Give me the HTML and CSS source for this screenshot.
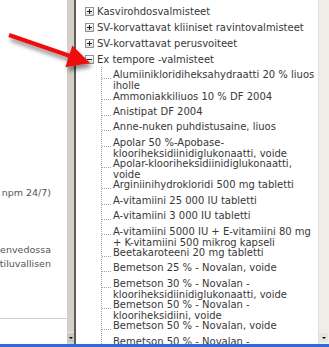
FILE: index.html
```html
<!DOCTYPE html>
<html lang="fi">
<head>
    <meta charset="UTF-8">
    <title>Ex tempore -valmisteet</title>
    <link rel="stylesheet" href="styles.css">
</head>
<body>
    <div class="screen">
        <div class="window">
            <!-- Left pane, mostly scrolled out of view -->
            <div class="left-pane">
                <p class="left-line first"><span>tarvittaessa npm 24/7)</span></p>
                <p class="left-line second"><span>valmisteyhteenvedossa</span></p>
                <p class="left-line"><span>myyntiluvallisen</span></p>
                <div class="left-rule"></div>
            </div>
            <div class="scrollbar dark">
                <div class="track"></div>
                <div class="arrow-btn"></div>
            </div>

            <!-- Product group tree -->
            <div class="tree">
                <ul class="tree-root">
                    <li><div class="node-row"><span class="toggle plus"></span>Luontaistuotteet</div></li>
                    <li><div class="node-row"><span class="toggle plus"></span>Kasvirohdosvalmisteet</div></li>
                    <li><div class="node-row"><span class="toggle plus"></span>SV-korvattavat kliiniset ravintovalmisteet</div></li>
                    <li><div class="node-row"><span class="toggle plus"></span>SV-korvattavat perusvoiteet</div></li>
                    <li>
                        <div class="node-row"><span class="toggle minus"></span>Ex tempore -valmisteet</div>
                        <ul class="children">
                            <li class="wrap">Alumiinikloridiheksahydraatti 20 % liuos iholle</li>
                            <li>Ammoniakkiliuos 10 % DF 2004</li>
                            <li>Anistipat DF 2004</li>
                            <li>Anne-nuken puhdistusaine, liuos</li>
                            <li class="wrap">Apolar 50 %-Apobase-klooriheksidiinidiglukonaatti, voide</li>
                            <li class="wrap">Apolar-klooriheksidiinidiglukonaatti, voide</li>
                            <li>Arginiinihydrokloridi 500 mg tabletti</li>
                            <li>A-vitamiini 25 000 IU tabletti</li>
                            <li>A-vitamiini 3 000 IU tabletti</li>
                            <li class="wrap">A-vitamiini 5000 IU + E-vitamiini 80 mg + K-vitamiini 500 mikrog kapseli</li>
                            <li>Beetakaroteeni 20 mg tabletti</li>
                            <li>Bemetson 25 % - Novalan, voide</li>
                            <li class="wrap">Bemetson 30 % - Novalan - klooriheksidiinidiglukonaatti, voide</li>
                            <li class="wrap">Bemetson 50 % - Novalan - klooriheksidiini, voide</li>
                            <li>Bemetson 50 % - Novalan, voide</li>
                            <li class="wrap">Bemetson 50 % - Novalan - salisyylihappo, voide</li>
                        </ul>
                    </li>
                </ul>
            </div>
            <div class="scrollbar light">
                <div class="track"></div>
                <div class="arrow-btn"></div>
            </div>
        </div>
        <div class="taskbar"></div>

        <!-- Red pointer arrow drawn over the screenshot -->
        <svg class="pointer" width="329" height="347" viewBox="0 0 329 347">
            <defs>
                <filter id="shadow" x="-20%" y="-20%" width="150%" height="160%">
                    <feDropShadow dx="2" dy="4" stdDeviation="2" flood-color="#000" flood-opacity="0.45"/>
                </filter>
            </defs>
            <g filter="url(#shadow)">
                <line x1="9" y1="35" x2="70" y2="56" stroke="#ee1111" stroke-width="4"/>
                <polygon points="90,63 65.3,67.3 72.4,45.5" fill="#ee1111"/>
            </g>
        </svg>
    </div>
</body>
</html>
```

FILE: styles.css
```css
body {
    margin: 0;
    font-family: 'DejaVu Sans', sans-serif;
    background: #fff;
}

.screen {
    position: relative;
    width: 329px;
    height: 347px;
    overflow: hidden;
    display: flex;
    flex-direction: column;
}

.window {
    display: flex;
    height: 344px;
}

/* Left pane */
.left-pane {
    width: 67px;
    flex: none;
    overflow: hidden;
    padding-top: 186px;
    box-sizing: border-box;
    color: #555;
    font-size: 9.5px;
}

.left-line {
    display: flex;
    justify-content: flex-end;
    width: 51px;
    margin: 0;
    line-height: 14px;
    white-space: nowrap;
}

.left-line.second {
    margin-top: 43px;
}

.left-rule {
    margin-top: 47px;
    height: 1px;
    background: #d0d0d0;
}

/* Scrollbars */
.scrollbar {
    flex: none;
    display: flex;
    flex-direction: column;
}

.scrollbar.dark {
    width: 7px;
    background: #d4d0c8;
    border-right: 2px solid #5c5c5c;
}

.scrollbar.light {
    width: 10px;
    background: #eeede6;
    border-left: 1px solid #e2e0d8;
}

.track {
    flex: 1;
}

.arrow-btn {
    height: 9px;
    margin-bottom: 2px;
    display: flex;
    align-items: center;
    justify-content: center;
}

.arrow-btn::after {
    content: "";
    border-left: 2px solid transparent;
    border-right: 2px solid transparent;
    border-top: 2px solid #000;
}

.scrollbar.dark .arrow-btn {
    background: #cac6bc;
    border-top: 1px solid #e8e6e0;
}

.scrollbar.light .arrow-btn {
    background: #e6e4dc;
    margin-right: 1px;
}

/* Tree */
.tree {
    flex: 1;
    overflow: hidden;
    background: #fff;
    color: #383838;
    font-size: 10px;
}

.tree ul {
    list-style: none;
    margin: 0;
}

.tree-root {
    margin-top: -13px !important;
    padding: 0 0 0 9px;
}

.node-row {
    display: flex;
    align-items: center;
    gap: 3px;
    height: 16px;
    white-space: nowrap;
}

.toggle {
    position: relative;
    width: 9px;
    height: 9px;
    box-sizing: border-box;
    border: 1px solid #939393;
    background: linear-gradient(#ffffff, #dcdcd4);
    flex: none;
}

.toggle::before,
.plus::after {
    content: "";
    position: absolute;
    background: #222;
}

.toggle::before {
    left: 1px;
    top: 3px;
    width: 5px;
    height: 1px;
}

.plus::after {
    left: 3px;
    top: 1px;
    width: 1px;
    height: 5px;
}

.children {
    margin-left: 16px !important;
    padding: 0;
    border-left: 1px dotted #a0a0a0;
}

.children li {
    position: relative;
    padding: 2.2px 0 2.2px 11px;
    line-height: 11px;
}

/* wrapped entries sit tighter against the next row */
.children li.wrap {
    margin-bottom: -5px;
}

.children li::before {
    content: "";
    position: absolute;
    left: 0;
    top: 11px;
    width: 9px;
    border-top: 1px dotted #a0a0a0;
}

.taskbar {
    height: 3px;
    background: #2f6bd5;
}

.pointer {
    position: absolute;
    left: 0;
    top: 0;
    pointer-events: none;
}
```
